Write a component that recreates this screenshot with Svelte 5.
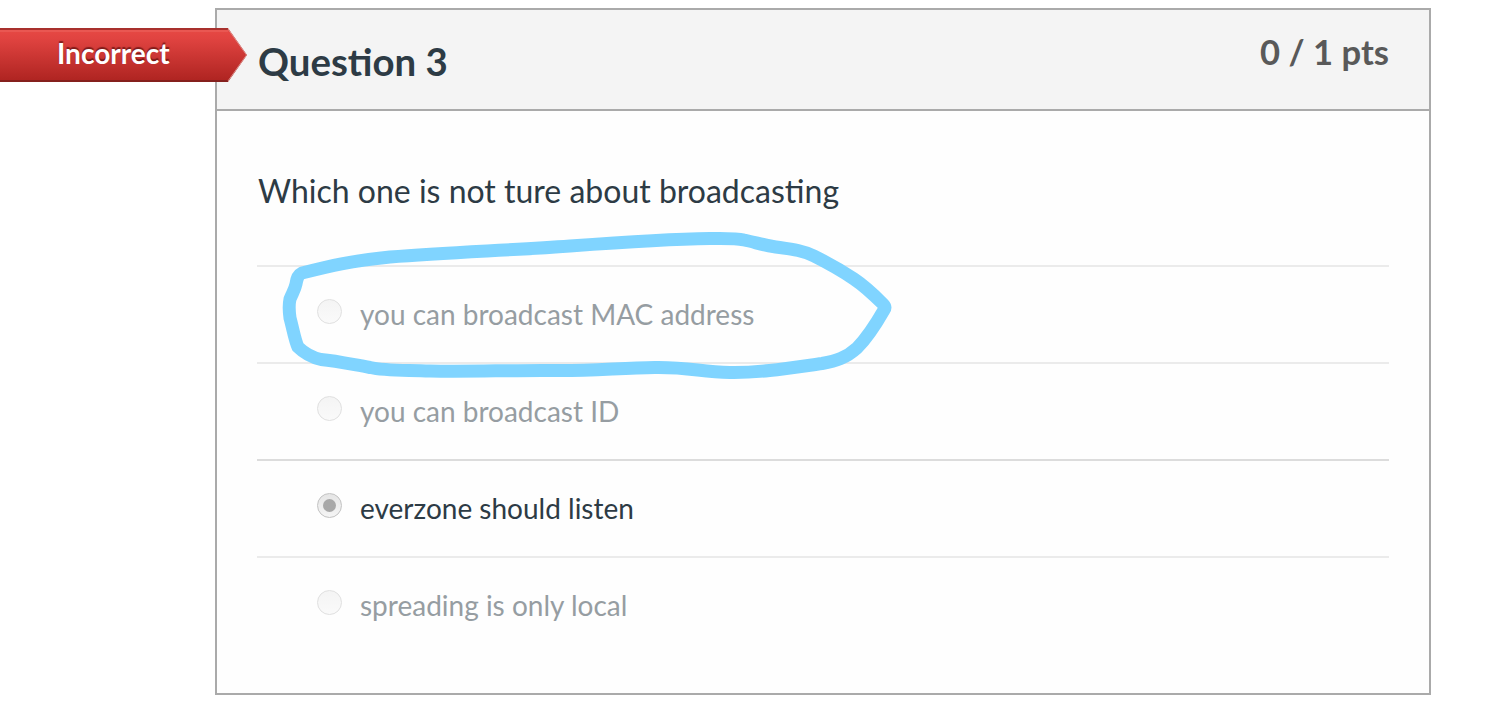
<script>
  const answers = [
    { text: 'you can broadcast MAC address', selected: false },
    { text: 'you can broadcast ID', selected: false },
    { text: 'everzone should listen', selected: true },
    { text: 'spreading is only local', selected: false }
  ];
</script>

<main>
  <section class="question">
    <header>
      <h2>Question 3</h2>
      <div class="points">0 / 1 pts</div>
    </header>
    <div class="body">
      <p>Which one is not ture about broadcasting</p>
      <ul>
        {#each answers as answer}
          <li class:selected={answer.selected}>
            <span class="radio"></span>
            <span class="label">{answer.text}</span>
          </li>
        {/each}
      </ul>
    </div>
  </section>

  <div class="flag">
    <svg width="248" height="54" viewBox="0 0 248 54">
      <defs>
        <linearGradient id="red" x1="0" y1="0" x2="0" y2="1">
          <stop offset="0" stop-color="#e84a45" />
          <stop offset="0.2" stop-color="#e04340" />
          <stop offset="1" stop-color="#ad2320" />
        </linearGradient>
      </defs>
      <path d="M0 0H228L247 27L228 54H0Z" fill="url(#red)" />
      <path d="M0 1H228" stroke="#a8302d" stroke-width="2" />
      <path d="M0 3H228" stroke="#ea5c57" stroke-width="1.5" />
      <path d="M0 53H228" stroke="#85201d" stroke-width="2" />
      <path d="M228 1L246.500 27L228 53" fill="none" stroke="#d98a86" stroke-width="1" />
    </svg>
    <span>Incorrect</span>
  </div>

  <svg class="marker" width="1502" height="722" viewBox="0 0 1502 722">
    <path
      d="M302 273C330 266 350 261 390 257C450 252 510 250.500 570 246C625 242 675 239 710 238.500C728 238.200 736 238 744 240C754 242 763 245 773 246.500C790 249 802 250 814 256C830 264 842 271 854 279C866 287 876 297 883 304Q886 307 884 310C876 324 867 338 857 348C846 358 836 361 822 363.500C790 368 760 373 730 372.500C700 372 690 367 655 367.500C620 368 590 371 555 370.500C510 370 470 372 430 371C405 370 385 371 370 367.500C350 364 337 361 321 359.500C310 357 304 353 298 347C295 341 293 329 290 318C289 311 288.500 306 290 299C293 292 295 289 296 284C297 278 298 275 302 273Z"
      fill="none"
      stroke="#80d4ff"
      stroke-width="13"
      stroke-linejoin="round"
    />
  </svg>
</main>

<style>
  :global(body) {
    background: #fff;
  }
  main {
    position: relative;
    box-sizing: border-box;
    width: 1502px;
    height: 722px;
    padding: 8px 71px 27px 215px;
    overflow: hidden;
    font-family: Lato, 'Open Sans', sans-serif;
    color: #2d3b45;
  }
  .question {
    box-sizing: border-box;
    height: 687px;
    border: 2px solid #aaa;
    background: #fefefe;
  }
  header {
    display: flex;
    justify-content: space-between;
    align-items: flex-start;
    box-sizing: border-box;
    height: 101px;
    padding: 0 40px 0 41px;
    border-bottom: 2px solid #aaa;
    background: #f4f4f4;
  }
  h2 {
    margin: 28px 0 0;
    font-size: 38.400px;
    line-height: 46px;
    font-weight: 700;
  }
  .points {
    margin-top: 19px;
    font-size: 34.600px;
    line-height: 46px;
    font-weight: 700;
    color: #595959;
  }
  .body {
    padding: 58px 40px 0;
  }
  p {
    margin: 0 0 0 1px;
    font-size: 32px;
    line-height: 44px;
  }
  ul {
    list-style: none;
    margin: 52px 0 0;
    padding: 0;
  }
  li {
    display: flex;
    align-items: flex-start;
    box-sizing: border-box;
    height: 97px;
    padding-left: 60px;
    border-top: 2px solid #ebebeb;
    font-size: 28px;
    line-height: 36px;
  }
  li.selected {
    border-top-color: #dcdcdc;
  }
  .radio {
    display: grid;
    place-items: center;
    box-sizing: border-box;
    width: 25px;
    height: 25px;
    margin-top: 32px;
    border: 1px solid #e0e0e0;
    border-radius: 50%;
    background: linear-gradient(#f4f4f4, #fafafa);
  }
  .selected .radio {
    border-color: #c2c2c2;
    background: linear-gradient(#e5e5e5, #f5f5f5);
  }
  .selected .radio::after {
    content: '';
    width: 13px;
    height: 13px;
    border-radius: 50%;
    background: #a8a8a8;
  }
  .label {
    margin: 29px 0 0 18px;
    color: #969da2;
  }
  .selected .label {
    color: #2d3b45;
  }
  .flag {
    position: absolute;
    top: 28px;
    left: 0;
    width: 248px;
    height: 54px;
  }
  .flag svg {
    display: block;
  }
  .flag span {
    position: absolute;
    left: 57px;
    top: 7px;
    font-size: 28px;
    line-height: 36px;
    font-weight: 700;
    color: #fff;
    text-shadow: 0 -2px 1px rgba(60, 0, 0, 0.55);
  }
  .marker {
    position: absolute;
    inset: 0;
    pointer-events: none;
  }
</style>
